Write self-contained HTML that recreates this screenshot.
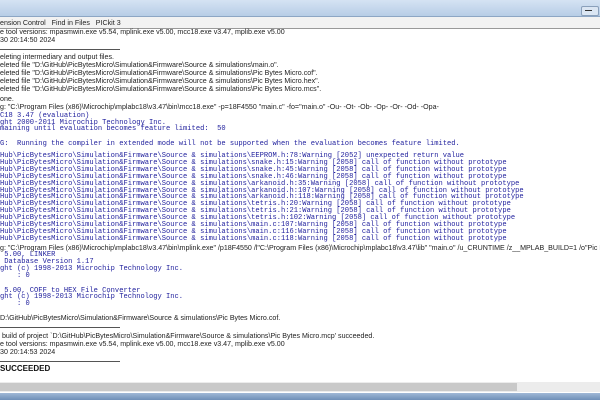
<!DOCTYPE html>
<html><head><style>
html,body{margin:0;padding:0;width:600px;height:400px;overflow:hidden;background:#fff;position:relative}
.wrap{position:absolute;left:0;top:0;width:600px;height:400px;overflow:hidden}
.t{position:absolute;left:0;white-space:pre;line-height:8px;height:8px}
.s{font-family:"Liberation Sans",sans-serif;font-size:7.1px;color:#222}
.m{font-family:"Liberation Mono",monospace;font-size:7.1px;color:#22229e}
.lst{line-height:6.9px;height:auto}
.r{position:absolute;left:0;width:120px;height:1px;background:#555}
</style></head><body><div class="wrap">
<div style="position:absolute;left:0;top:0;width:600px;height:16px;background:linear-gradient(#d5e3f3,#b7cde6);border-bottom:1px solid #8da6c4"></div>
<div style="position:absolute;left:581px;top:6px;width:16px;height:8px;border:1px solid #8aa0bb;border-radius:2px;background:#dbe6f3"></div>
<div style="position:absolute;left:585px;top:10px;width:7px;height:1px;background:#333"></div>
<div style="position:absolute;left:0;top:17px;width:600px;height:11px;background:#f2f2f2;border-bottom:1px solid #999"></div>
<div class="t s" style="top:19px">ension Control   Find in Files   PICkit 3</div>
<div class="t s" style="top:28px">e tool versions: mpasmwin.exe v5.54, mplink.exe v5.00, mcc18.exe v3.47, mplib.exe v5.00</div>
<div class="t s" style="top:36px">30 20:14:50 2024</div>
<div class="r" style="top:49px"></div>
<div class="t s" style="top:53px">eleting intermediary and output files.</div>
<div class="t s" style="top:61px">eleted file "D:\GitHub\PicBytesMicro\Simulation&amp;Firmware\Source &amp; simulations\main.o".</div>
<div class="t s" style="top:69px">eleted file "D:\GitHub\PicBytesMicro\Simulation&amp;Firmware\Source &amp; simulations\Pic Bytes Micro.cof".</div>
<div class="t s" style="top:77px">eleted file "D:\GitHub\PicBytesMicro\Simulation&amp;Firmware\Source &amp; simulations\Pic Bytes Micro.hex".</div>
<div class="t s" style="top:85px">eleted file "D:\GitHub\PicBytesMicro\Simulation&amp;Firmware\Source &amp; simulations\Pic Bytes Micro.mcs".</div>
<div class="t s" style="top:95px">one.</div>
<div class="t s" style="top:103px">g: "C:\Program Files (x86)\Microchip\mplabc18\v3.47\bin\mcc18.exe" -p=18F4550 "main.c" -fo="main.o" -Ou- -Ot- -Ob- -Op- -Or- -Od- -Opa-</div>
<div class="t m" style="top:112px">C18 3.47 (evaluation)</div>
<div class="t m" style="top:119px">ght 2000-2011 Microchip Technology Inc.</div>
<div class="t m" style="top:125px">maining until evaluation becomes feature limited:  50</div>
<div class="t m" style="top:140px">G:  Running the compiler in extended mode will not be supported when the evaluation becomes feature limited.</div>
<div class="t m lst" style="top:153px">Hub\PicBytesMicro\Simulation&amp;Firmware\Source &amp; simulations\EEPROM.h:78:Warning [2052] unexpected return value
Hub\PicBytesMicro\Simulation&amp;Firmware\Source &amp; simulations\snake.h:15:Warning [2058] call of function without prototype
Hub\PicBytesMicro\Simulation&amp;Firmware\Source &amp; simulations\snake.h:45:Warning [2058] call of function without prototype
Hub\PicBytesMicro\Simulation&amp;Firmware\Source &amp; simulations\snake.h:46:Warning [2058] call of function without prototype
Hub\PicBytesMicro\Simulation&amp;Firmware\Source &amp; simulations\arkanoid.h:35:Warning [2058] call of function without prototype
Hub\PicBytesMicro\Simulation&amp;Firmware\Source &amp; simulations\arkanoid.h:107:Warning [2058] call of function without prototype
Hub\PicBytesMicro\Simulation&amp;Firmware\Source &amp; simulations\arkanoid.h:118:Warning [2058] call of function without prototype
Hub\PicBytesMicro\Simulation&amp;Firmware\Source &amp; simulations\tetris.h:20:Warning [2058] call of function without prototype
Hub\PicBytesMicro\Simulation&amp;Firmware\Source &amp; simulations\tetris.h:21:Warning [2058] call of function without prototype
Hub\PicBytesMicro\Simulation&amp;Firmware\Source &amp; simulations\tetris.h:102:Warning [2058] call of function without prototype
Hub\PicBytesMicro\Simulation&amp;Firmware\Source &amp; simulations\main.c:107:Warning [2058] call of function without prototype
Hub\PicBytesMicro\Simulation&amp;Firmware\Source &amp; simulations\main.c:116:Warning [2058] call of function without prototype
Hub\PicBytesMicro\Simulation&amp;Firmware\Source &amp; simulations\main.c:118:Warning [2058] call of function without prototype</div>
<div class="t s" style="top:244px">g: "C:\Program Files (x86)\Microchip\mplabc18\v3.47\bin\mplink.exe" /p18F4550 /l"C:\Program Files (x86)\Microchip\mplabc18\v3.47\lib" "main.o" /u_CRUNTIME /z__MPLAB_BUILD=1 /o"Pic Bytes Micro.cof"</div>
<div class="t m" style="top:251px"> 5.00, LINKER</div>
<div class="t m" style="top:258px"> Database Version 1.17</div>
<div class="t m" style="top:265px">ght (c) 1998-2013 Microchip Technology Inc.</div>
<div class="t m" style="top:272px">    : 0</div>
<div class="t m" style="top:287px"> 5.00, COFF to HEX File Converter</div>
<div class="t m" style="top:293px">ght (c) 1998-2013 Microchip Technology Inc.</div>
<div class="t m" style="top:300px">    : 0</div>
<div class="t s" style="top:314px">D:\GitHub\PicBytesMicro\Simulation&amp;Firmware\Source &amp; simulations\Pic Bytes Micro.cof.</div>
<div class="r" style="top:327px"></div>
<div class="t s" style="top:332px"> build of project `D:\GitHub\PicBytesMicro\Simulation&amp;Firmware\Source &amp; simulations\Pic Bytes Micro.mcp' succeeded.</div>
<div class="t s" style="top:340px">e tool versions: mpasmwin.exe v5.54, mplink.exe v5.00, mcc18.exe v3.47, mplib.exe v5.00</div>
<div class="t s" style="top:348px">30 20:14:53 2024</div>
<div class="r" style="top:361px"></div>
<div class="t s" style="top:365px;font-weight:bold;font-size:8px;color:#111">SUCCEEDED</div>
<div style="position:absolute;left:0;top:382px;width:600px;height:10px;background:#ececec"></div>
<div style="position:absolute;left:0;top:383px;width:517px;height:8px;background:#c9c9c9"></div>
<div style="position:absolute;left:0;top:393px;width:600px;height:7px;background:linear-gradient(#9fb8d6,#6f8fb8)"></div>
</div></body></html>
